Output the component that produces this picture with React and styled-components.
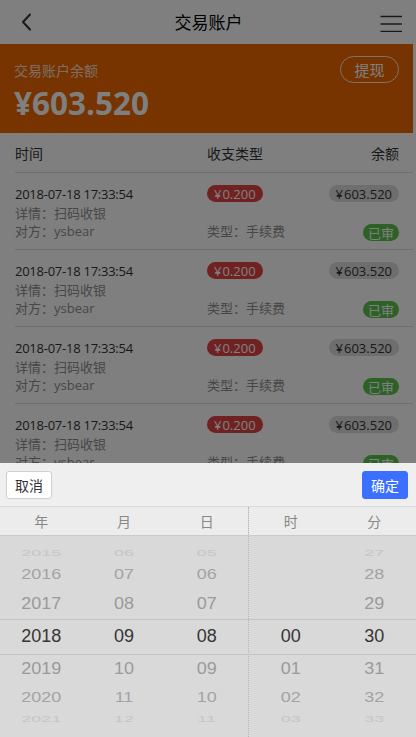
import React from 'react';
import styled, { createGlobalStyle } from 'styled-components';

const Global = createGlobalStyle`
  html, body { margin: 0; padding: 0; background: #fff; }
  body {
    font-family: "Open Sans", "Noto Sans CJK SC", sans-serif;
    -webkit-font-smoothing: antialiased;
  }
  * { box-sizing: border-box; }
`;

const Page = styled.div`
  width: calc(100% - 3px);
  min-height: 737px;
  background: #fff;
`;

const Header = styled.header`
  height: 44px;
  display: flex;
  align-items: center;
  justify-content: space-between;
  padding: 0 10px 0 14px;
  background: #fff;
`;

const Title = styled.h1`
  margin: 0;
  font-size: 17px;
  font-weight: 400;
  color: #000;
  font-family: "Noto Sans CJK SC", sans-serif;
  line-height: 44px;
`;

const IconButton = styled.span`
  width: 24px;
  height: 24px;
  display: flex;
  align-items: center;
  justify-content: center;
`;

const Banner = styled.section`
  height: 89px;
  background: #ee6600;
  padding: 12px 14px 0 14px;
  display: flex;
  flex-direction: column;
`;

const BannerTop = styled.div`
  display: flex;
  justify-content: space-between;
  align-items: center;
`;

const BannerLabel = styled.span`
  font-family: "Noto Sans CJK SC", sans-serif;
  font-size: 14px;
  color: rgba(255, 255, 255, 0.8);
  line-height: 26px;
`;

const Withdraw = styled.button`
  width: 59px;
  height: 27px;
  border: 1px solid rgba(255, 255, 255, 0.85);
  border-radius: 14px;
  background: transparent;
  color: #fff;
  font-family: "Noto Sans CJK SC", sans-serif;
  font-size: 15px;
  padding: 0;
  line-height: 24px;
`;

const Amount = styled.div`
  font-family: "Open Sans", sans-serif;
  font-weight: 700;
  font-size: 31.5px;
  color: #fff;
  line-height: 38px;
  margin-top: 1px;
`;

const Table = styled.div`
  padding-left: 15px;
`;

const Cols = styled.div`
  display: grid;
  grid-template-columns: 192px 1fr auto;
  padding-right: 14px;
  border-bottom: 1px solid #dcdcdc;
`;

const HeadRow = styled(Cols)`
  height: 40px;
  align-items: center;
  font-family: "Noto Sans CJK SC", sans-serif;
  font-size: 14px;
  color: #333;
`;

const Row = styled(Cols)`
  height: 77px;
  padding-top: 12px;
  padding-bottom: 10px;
`;

const Stack = styled.div`
  display: flex;
  flex-direction: column;
  justify-content: space-between;
  align-items: ${(p) => (p.$end ? 'flex-end' : 'flex-start')};
`;

const Line = styled.div`
  font-size: 13px;
  line-height: 18.5px;
  color: ${(p) => (p.$muted ? '#8e8e8e' : '#333')};
  font-family: "Open Sans", "Noto Sans CJK SC", sans-serif;
  white-space: nowrap;
  letter-spacing: ${(p) => (p.$tight ? '-0.25px' : '0')};
`;

const Pill = styled.span`
  display: inline-flex;
  align-items: center;
  height: 17px;
  padding: 0 ${(p) => p.$pad || 7}px;
  border-radius: 9px;
  font-size: 13px;
  font-family: "Open Sans", "Noto Sans CJK SC", sans-serif;
  background: ${(p) => p.$bg};
  color: ${(p) => p.$fg};
  white-space: nowrap;
`;

const Yen = styled.span`
  margin-right: 1px;
`;

const Overlay = styled.div`
  position: fixed;
  inset: 0;
  background: rgba(0, 0, 0, 0.5);
`;

const Picker = styled.div`
  position: fixed;
  left: 0;
  right: 0;
  bottom: 0;
  height: 274px;
  background: #d9d9d9;
  display: flex;
  flex-direction: column;
`;

const Toolbar = styled.div`
  height: 44px;
  background: #efefef;
  border-bottom: 1px solid #dadada;
  display: flex;
  justify-content: space-between;
  align-items: center;
  padding: 0 8px 0 6px;
`;

const ToolButton = styled.button`
  width: 46px;
  height: 28px;
  border-radius: 3px;
  border: 1px solid ${(p) => (p.$primary ? '#3b6fff' : '#cfcfcf')};
  background: ${(p) => (p.$primary ? '#3b6fff' : '#fff')};
  color: ${(p) => (p.$primary ? '#fff' : '#333')};
  font-family: "Noto Sans CJK SC", sans-serif;
  font-size: 14px;
  padding: 0;
`;

const Groups = styled.div`
  flex: 1;
  display: grid;
  grid-template-columns: 248px 1fr;
`;

const Group = styled.div`
  display: flex;
  flex-direction: column;
  border-left: ${(p) => (p.$divided ? '1px dotted #b5b5b5' : 'none')};
`;

const LabelRow = styled.div`
  height: 29px;
  background: #ececec;
  border-bottom: 1px solid #cacaca;
  display: grid;
  grid-template-columns: repeat(${(p) => p.$n}, 1fr);
  align-items: center;
  text-align: center;
  font-family: "Noto Sans CJK SC", sans-serif;
  font-size: 14px;
  color: #888;
`;

const Wheels = styled.div`
  flex: 1;
  display: grid;
  grid-template-columns: repeat(${(p) => p.$n}, 1fr);
`;

const BandWrap = styled.div`
  position: relative;
  flex: 1;
  display: flex;
  flex-direction: column;
`;

const Band = styled.div`
  position: absolute;
  left: 0;
  right: 0;
  top: calc(50% + 15px);
  height: 36px;
  margin-top: -18px;
  border-top: 1px solid #c4c4c4;
  border-bottom: 1px solid #c4c4c4;
  pointer-events: none;
`;

const Wheel = styled.div`
  display: grid;
  align-items: center;
  justify-items: center;
  height: 200px;
  overflow: hidden;
`;

const WheelItem = styled.div`
  grid-area: 1 / 1;
  font-family: "Liberation Sans", Arial, sans-serif;
  font-size: 18px;
  line-height: 20px;
  height: 20px;
  color: ${(p) => p.$color};
`;

const ITEM_COLORS = ['#353535', '#9a9a9a', '#a3a3a3', '#c6c6c6'];

function WheelColumn({ items, selected }) {
  return (
    <Wheel>
      {items.map((v, i) => {
        const d = i - selected;
        const ad = Math.abs(d);
        if (ad > 3) return null;
        const ang = (d * 20 * Math.PI) / 180;
        const y = 96 * Math.sin(ang);
        const s = Math.cos(ang);
        return (
          <WheelItem
            key={v}
            $color={ITEM_COLORS[ad]}
            style={{ transform: `translateY(${y.toFixed(1)}px) scaleY(${s.toFixed(3)})` }}
          >
            {v}
          </WheelItem>
        );
      })}
    </Wheel>
  );
}

const rows = Array.from({ length: 4 }, () => ({
  date: '2018-07-18 17:33:54',
  detail: '扫码收银',
  party: 'ysbear',
  amount: '0.200',
  balance: '603.520',
  type: '手续费',
  status: '已审',
}));

const range = (a, b) => Array.from({ length: b - a + 1 }, (_, i) => String(a + i).padStart(2, '0'));

export default function App() {
  return (
    <>
      <Global />
      <Page>
        <Header>
          <IconButton>
            <svg width="14" height="18" viewBox="0 0 14 18">
              <path d="M11 1.5 L4 9 L11 16.5" fill="none" stroke="#333" strokeWidth="2" strokeLinecap="round" strokeLinejoin="round" />
            </svg>
          </IconButton>
          <Title>交易账户</Title>
          <IconButton>
            <svg width="24" height="20" viewBox="0 0 24 20">
              <path d="M1.5 4.5 H23 M1.5 12 H23 M1.5 19.5 H23" stroke="#333" strokeWidth="1.3" />
            </svg>
          </IconButton>
        </Header>
        <Banner>
          <BannerTop>
            <BannerLabel>交易账户余额</BannerLabel>
            <Withdraw>提现</Withdraw>
          </BannerTop>
          <Amount>¥603.520</Amount>
        </Banner>
        <Table>
          <HeadRow>
            <span>时间</span>
            <span>收支类型</span>
            <span>余额</span>
          </HeadRow>
          {rows.map((r, i) => (
            <Row key={i}>
              <Stack>
                <Line $tight>{r.date}</Line>
                <Line $muted>详情：{r.detail}</Line>
                <Line $muted>对方：{r.party}</Line>
              </Stack>
              <Stack>
                <Pill $bg="#e04444" $fg="#fff" $pad={7}><Yen>¥</Yen>{r.amount}</Pill>
                <Line $muted>类型：{r.type}</Line>
              </Stack>
              <Stack $end>
                <Pill $bg="#dcdcdc" $fg="#333" $pad={7}><Yen>¥</Yen>{r.balance}</Pill>
                <Pill $bg="#5cc24c" $fg="#fff" $pad={5}>{r.status}</Pill>
              </Stack>
            </Row>
          ))}
        </Table>
      </Page>
      <Overlay />
      <Picker>
        <Toolbar>
          <ToolButton>取消</ToolButton>
          <ToolButton $primary>确定</ToolButton>
        </Toolbar>
        <BandWrap>
          <Groups>
            <Group>
              <LabelRow $n={3}>
                <span>年</span>
                <span>月</span>
                <span>日</span>
              </LabelRow>
              <Wheels $n={3}>
                <WheelColumn items={range(2015, 2021)} selected={3} />
                <WheelColumn items={range(6, 12)} selected={3} />
                <WheelColumn items={range(5, 11)} selected={3} />
              </Wheels>
            </Group>
            <Group $divided>
              <LabelRow $n={2}>
                <span>时</span>
                <span>分</span>
              </LabelRow>
              <Wheels $n={2}>
                <WheelColumn items={range(0, 3)} selected={0} />
                <WheelColumn items={range(27, 33)} selected={3} />
              </Wheels>
            </Group>
          </Groups>
          <Band />
        </BandWrap>
      </Picker>
    </>
  );
}
